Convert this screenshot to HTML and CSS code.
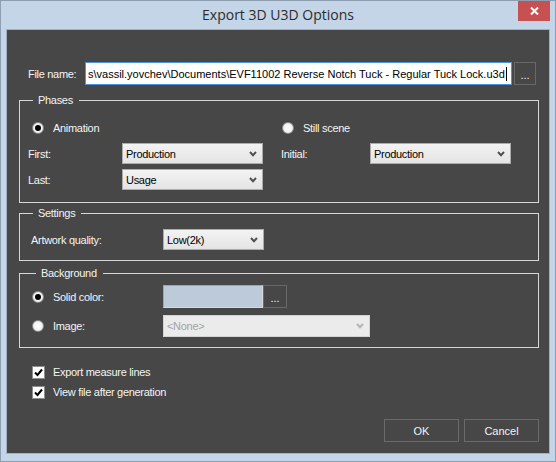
FILE: index.html
```html
<!DOCTYPE html>
<html>
<head>
<meta charset="utf-8">
<link rel="stylesheet" href="styles.css">
</head>
<body>
<div class="window">
  <div class="titlebar">
    <div class="title">Export 3D U3D Options</div>
    <div class="close">
      <svg width="9" height="8" viewBox="0 0 9 8"><path d="M1 0.5 L8 7.5 M8 0.5 L1 7.5" stroke="#fff" stroke-width="2" fill="none"/></svg>
    </div>
  </div>
  <div class="client">
    <div class="file-row">
      <span class="file-lbl">File name:</span>
      <div class="textbox"><span class="tb-text">s\vassil.yovchev\Documents\EVF11002 Reverse Notch Tuck - Regular Tuck Lock.u3d</span><span class="caret"></span></div>
      <div class="dots-btn">...</div>
    </div>

    <fieldset class="group phases">
      <legend>Phases</legend>
      <div class="phases-grid">
        <div class="radio radio-anim"><span class="rb checked"></span><span>Animation</span></div>
        <div class="radio radio-still"><span class="rb"></span><span>Still scene</span></div>
        <span class="lbl">First:</span>
        <div class="combo"><span>Production</span><svg width="8" height="6" viewBox="0 0 8 6"><polyline points="1,1 4,4.2 7,1" fill="none" stroke="#505050" stroke-width="2"/></svg></div>
        <span></span>
        <span class="lbl">Initial:</span>
        <div class="combo"><span>Production</span><svg width="8" height="6" viewBox="0 0 8 6"><polyline points="1,1 4,4.2 7,1" fill="none" stroke="#505050" stroke-width="2"/></svg></div>
        <span class="lbl">Last:</span>
        <div class="combo"><span>Usage</span><svg width="8" height="6" viewBox="0 0 8 6"><polyline points="1,1 4,4.2 7,1" fill="none" stroke="#505050" stroke-width="2"/></svg></div>
      </div>
    </fieldset>

    <fieldset class="group settings">
      <legend>Settings</legend>
      <div class="settings-grid">
        <span class="lbl">Artwork quality:</span>
        <div class="combo"><span>Low(2k)</span><svg width="8" height="6" viewBox="0 0 8 6"><polyline points="1,1 4,4.2 7,1" fill="none" stroke="#505050" stroke-width="2"/></svg></div>
      </div>
    </fieldset>

    <fieldset class="group background">
      <legend>Background</legend>
      <div class="bg-body">
        <div class="bg-row solid">
          <div class="radio bg-radio"><span class="rb checked"></span><span>Solid color:</span></div>
          <div class="swatch"></div>
          <div class="dots-btn swatch-btn">...</div>
        </div>
        <div class="bg-row image">
          <div class="radio bg-radio"><span class="rb"></span><span>Image:</span></div>
          <div class="combo disabled"><span>&lt;None&gt;</span><svg width="8" height="6" viewBox="0 0 8 6"><polyline points="1,1 4,4.2 7,1" fill="none" stroke="#b5b5b5" stroke-width="2"/></svg></div>
        </div>
      </div>
    </fieldset>

    <div class="checks">
      <div class="check"><span class="cb"><svg width="11" height="11" viewBox="0 0 11 11"><polyline points="2,5.5 4.5,8 9,2.5" fill="none" stroke="#000" stroke-width="2"/></svg></span><span>Export measure lines</span></div>
      <div class="check"><span class="cb"><svg width="11" height="11" viewBox="0 0 11 11"><polyline points="2,5.5 4.5,8 9,2.5" fill="none" stroke="#000" stroke-width="2"/></svg></span><span>View file after generation</span></div>
    </div>

    <div class="buttons">
      <div class="btn">OK</div>
      <div class="btn">Cancel</div>
    </div>
  </div>
</div>
</body>
</html>
```

FILE: styles.css
```css
html, body {
  margin: 0;
  padding: 0;
}
body {
  font-family: "Liberation Sans", Arial, sans-serif;
}
.window {
  width: 556px;
  height: 462px;
  box-sizing: border-box;
  border: 1px solid #8c9eb0;
  background: #c3d5e6;
  padding: 0 5px 7px 5px;
  display: flex;
  flex-direction: column;
}
.titlebar {
  height: 28px;
  flex: none;
  display: flex;
  align-items: flex-start;
}
.title {
  flex: 1;
  padding-left: 32px;
  text-align: center;
  font-family: "Open Sans", sans-serif;
  font-size: 14px;
  line-height: 28px;
  color: #2c2c2c;
}
.close {
  width: 32px;
  height: 20px;
  background: #c75050;
  display: flex;
  align-items: center;
  justify-content: center;
}
.client {
  flex: 1;
  border: 1px solid #9fb2c5;
  background: #474747;
  display: flex;
  flex-direction: column;
  color: #f4f4f4;
  font-size: 11px;
  letter-spacing: -0.3px;
}
.file-row {
  margin-top: 32px;
  height: 23px;
  padding-left: 21px;
  display: flex;
  align-items: center;
}
.file-lbl {
  width: 57px;
  flex: none;
}
.textbox {
  width: 427px;
  height: 23px;
  box-sizing: border-box;
  flex: none;
  border: 1px solid #4b93dc;
  background: #fff;
  color: #000;
  letter-spacing: 0;
  white-space: nowrap;
  overflow: hidden;
  display: flex;
  justify-content: flex-start;
  align-items: center;
  padding-left: 2px;
}
.tb-text {
  flex: none;
}
.caret {
  flex: none;
  width: 1px;
  height: 14px;
  background: #000;
  margin-left: 1px;
}
.dots-btn {
  width: 22px;
  height: 23px;
  box-sizing: border-box;
  margin-left: 2px;
  border: 1px solid #686868;
  display: flex;
  align-items: center;
  justify-content: center;
  padding-top: 3px;
  letter-spacing: 0;
}
.group {
  margin: 9px 10px 0 12px;
  padding: 0;
  border: 1px solid #d6d6d6;
  min-width: 0;
}
.group legend {
  margin-left: 13px;
  padding: 0 6px 0 5px;
  line-height: 13px;
}
.settings {
  margin-top: 4px;
}
.background {
  margin-top: 6px;
}
.background legend {
  margin-left: 16px;
}
.phases-grid {
  display: grid;
  grid-template-columns: 94px 141px 18px 89px 141px;
  grid-template-rows: 21px 21px 21px;
  row-gap: 5px;
  padding: 10px 0 12px 8px;
  align-items: center;
}
.radio {
  display: flex;
  align-items: center;
}
.radio-anim {
  grid-column: 1 / 3;
  margin-left: 4px;
}
.radio-still {
  grid-column: 4 / 6;
  margin-left: 1px;
}
.rb {
  width: 12px;
  height: 12px;
  box-sizing: border-box;
  border-radius: 50%;
  border: 1px solid #8a8a8a;
  background: radial-gradient(circle, #ffffff 0%, #f4f4f4 55%, #dcdcdc 100%);
  margin-right: 9px;
  display: flex;
  align-items: center;
  justify-content: center;
  flex: none;
}
.rb.checked::after {
  content: "";
  width: 6px;
  height: 6px;
  border-radius: 50%;
  background: #000;
}
.combo {
  height: 21px;
  box-sizing: border-box;
  border: 1px solid #acacac;
  background: linear-gradient(#f3f3f3, #e4e4e4);
  color: #000;
  display: flex;
  align-items: center;
  justify-content: space-between;
  padding: 0 5px 0 3px;
}
.combo svg {
  flex: none;
}
.combo.disabled {
  background: #ebebeb;
  border-color: #d4d4d4;
  color: #a2a2a2;
}
.settings-grid {
  display: grid;
  grid-template-columns: 132px 101px;
  grid-template-rows: 21px;
  padding: 9px 0 10px 11px;
  align-items: center;
}
.bg-body {
  padding: 5px 0 10px 12px;
  display: flex;
  flex-direction: column;
  row-gap: 7px;
}
.bg-row {
  display: flex;
  align-items: center;
}
.bg-row.solid {
  height: 23px;
}
.bg-row.image {
  height: 22px;
}
.bg-radio {
  width: 131px;
  flex: none;
}
.swatch {
  width: 100px;
  height: 23px;
  box-sizing: border-box;
  border: 1px solid #a4a4a4;
  border-right-color: #d8d8d8;
  border-bottom-color: #d8d8d8;
  background: #bccad9;
}
.swatch-btn {
  width: 24px;
  margin-left: 0;
}
.bg-row.image .combo {
  width: 207px;
  height: 22px;
}
.checks {
  margin-top: 14px;
  padding-left: 25px;
  display: flex;
  flex-direction: column;
}
.check {
  height: 20px;
  display: flex;
  align-items: center;
}
.cb {
  width: 13px;
  height: 13px;
  box-sizing: border-box;
  border: 1px solid #8e8e8e;
  background: #fff;
  margin-right: 8px;
  display: flex;
  align-items: center;
  justify-content: center;
}
.buttons {
  margin-top: 17px;
  padding-right: 10px;
  display: flex;
  justify-content: flex-end;
  column-gap: 5px;
}
.btn {
  width: 75px;
  height: 23px;
  box-sizing: border-box;
  border: 1px solid #6a6a6a;
  display: flex;
  align-items: center;
  justify-content: center;
  letter-spacing: 0;
}
```
